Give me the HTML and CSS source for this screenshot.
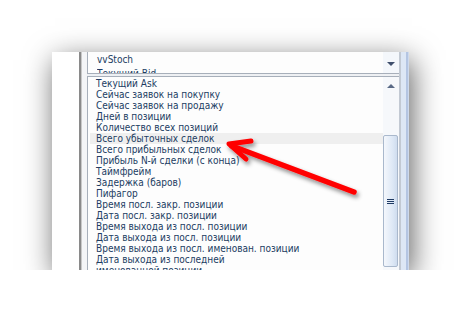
FILE: index.html
```html
<!DOCTYPE html>
<html lang="ru">
<head>
    <meta charset="UTF-8">
    <title>Список параметров</title>
    <link rel="stylesheet" href="styles.css">
</head>
<body>
    <div class="shot">
        <div class="rail"></div>
        <div class="divider"></div>
        <div class="main">
            <div class="combo">
                <div class="combo-text">
                    <div class="combo-line">vvStoch</div>
                    <div class="combo-line combo-next">Текущий Bid</div>
                </div>
                <div class="combo-btn"><span class="tri tri-down"></span></div>
            </div>
            <div class="list">
                <ul class="items">
                    <li>Текущий Ask</li>
                    <li>Сейчас заявок на покупку</li>
                    <li>Сейчас заявок на продажу</li>
                    <li>Дней в позиции</li>
                    <li>Количество всех позиций</li>
                    <li class="hover">Всего убыточных сделок</li>
                    <li>Всего прибыльных сделок</li>
                    <li>Прибыль N-й сделки (с конца)</li>
                    <li>Таймфрейм</li>
                    <li>Задержка (баров)</li>
                    <li>Пифагор</li>
                    <li>Время посл. закр. позиции</li>
                    <li>Дата посл. закр. позиции</li>
                    <li>Время выхода из посл. позиции</li>
                    <li>Дата выхода из посл. позиции</li>
                    <li>Время выхода из посл. именован. позиции</li>
                    <li>Дата выхода из последней<br>именованной позиции</li>
                </ul>
                <div class="vscroll">
                    <div class="vscroll-up"><span class="tri tri-up"></span></div>
                    <div class="thumb"><span class="grip"></span></div>
                </div>
            </div>
        </div>
        <div class="outer-bar"></div>

        <svg class="arrow" width="461" height="322" viewBox="0 0 461 322">
            <defs>
                <filter id="arrow-shadow" x="-20%" y="-20%" width="140%" height="160%">
                    <feDropShadow dx="2" dy="3" stdDeviation="2" flood-color="#000" flood-opacity="0.45"/>
                </filter>
            </defs>
            <g filter="url(#arrow-shadow)" stroke="#ff0000" stroke-linecap="round" stroke-linejoin="round" fill="none">
                <path d="M354 192 L232 146" stroke-width="5.5"/>
                <path d="M251 141 L229 144 L246 159" stroke-width="5"/>
            </g>
        </svg>
    </div>
</body>
</html>
```

FILE: styles.css
```css
body {
    margin: 0;
    background-color: #fff;
    font-family: "DejaVu Sans Condensed", "DejaVu Sans", Tahoma, sans-serif;
    font-size: 10px;
    color: #213c62;
}

.shot {
    margin: 52px 0 0 52px;
    width: 357px;
    height: 218px;
    display: flex;
    background-color: #fff;
    box-shadow: 3px 8px 28px rgba(0, 0, 0, 0.62);
}

.rail {
    width: 27px;
    background-color: #fff;
}

.divider {
    width: 8px;
    background: linear-gradient(to right, #8a8a8a 0, #8a8a8a 2px, #c8c8c8 2px, #c8c8c8 3px, #f4f5f7 3px);
}

.main {
    width: 312px;
    display: flex;
    flex-direction: column;
    background-color: #eef0f3;
}

.combo {
    height: 21px;
    display: flex;
    border-left: 1px solid #a7afba;
    border-bottom: 1px solid #a7afba;
    background-color: #fdfdfd;
}

.combo-text {
    flex: 1;
    height: 21px;
    overflow: hidden;
    padding-left: 9px;
}

.combo-line {
    height: 11px;
    line-height: 11px;
    margin-top: 2px;
    white-space: nowrap;
}

/* only the top of the next entry peeks out */
.combo-next {
    height: 5px;
    margin-top: 3px;
    overflow: hidden;
}

.combo-btn {
    width: 16px;
    display: flex;
    justify-content: center;
    align-items: center;
    padding-top: 3px;
    background-color: #f4f7fb;
}

.tri {
    width: 0;
    height: 0;
    border-left: 4px solid transparent;
    border-right: 4px solid transparent;
}

.tri-down {
    border-top: 4px solid #3f4f6c;
}

.tri-up {
    border-bottom: 4px solid #5a6a86;
}

.list {
    flex: 1;
    margin-top: 2px;
    display: flex;
    border-top: 1px solid #a7afba;
    border-left: 1px solid #a7afba;
    background-color: #fdfdfd;
    overflow: hidden;
}

.items {
    flex: 1;
    list-style: none;
    margin: 0;
    padding: 1px 0 0 2px;
}

.items li {
    line-height: 11px;
    padding-left: 6px;
    white-space: nowrap;
}

.items li.hover {
    background-color: #efefef;
}

.vscroll {
    width: 16px;
    display: flex;
    flex-direction: column;
    background-color: #f6f8fb;
}

.vscroll-up {
    height: 18px;
    display: flex;
    justify-content: center;
    align-items: center;
}

.thumb {
    margin: 40px 1px 0 0;
    height: 130px;
    display: flex;
    justify-content: center;
    align-items: center;
    border: 1px solid #a9b8cc;
    border-radius: 2px;
    background: linear-gradient(to right, #f4f7fc, #dce7f5 70%, #cfdcee);
}

.grip {
    width: 7px;
    height: 5px;
    background: linear-gradient(to bottom, #1e3a64 0, #1e3a64 1px, transparent 1px, transparent 2px, #1e3a64 2px, #1e3a64 3px, transparent 3px, transparent 4px, #1e3a64 4px);
}

.outer-bar {
    width: 10px;
    background: linear-gradient(to right, #c2c9d3 0, #c2c9d3 2px, #dde7f5 2px, #dde7f5 7px, #b4c5e2 7px, #b4c5e2 9px, #cdd9ec 9px);
}

.arrow {
    position: absolute;
    left: 0;
    top: 0;
    pointer-events: none;
}
```
